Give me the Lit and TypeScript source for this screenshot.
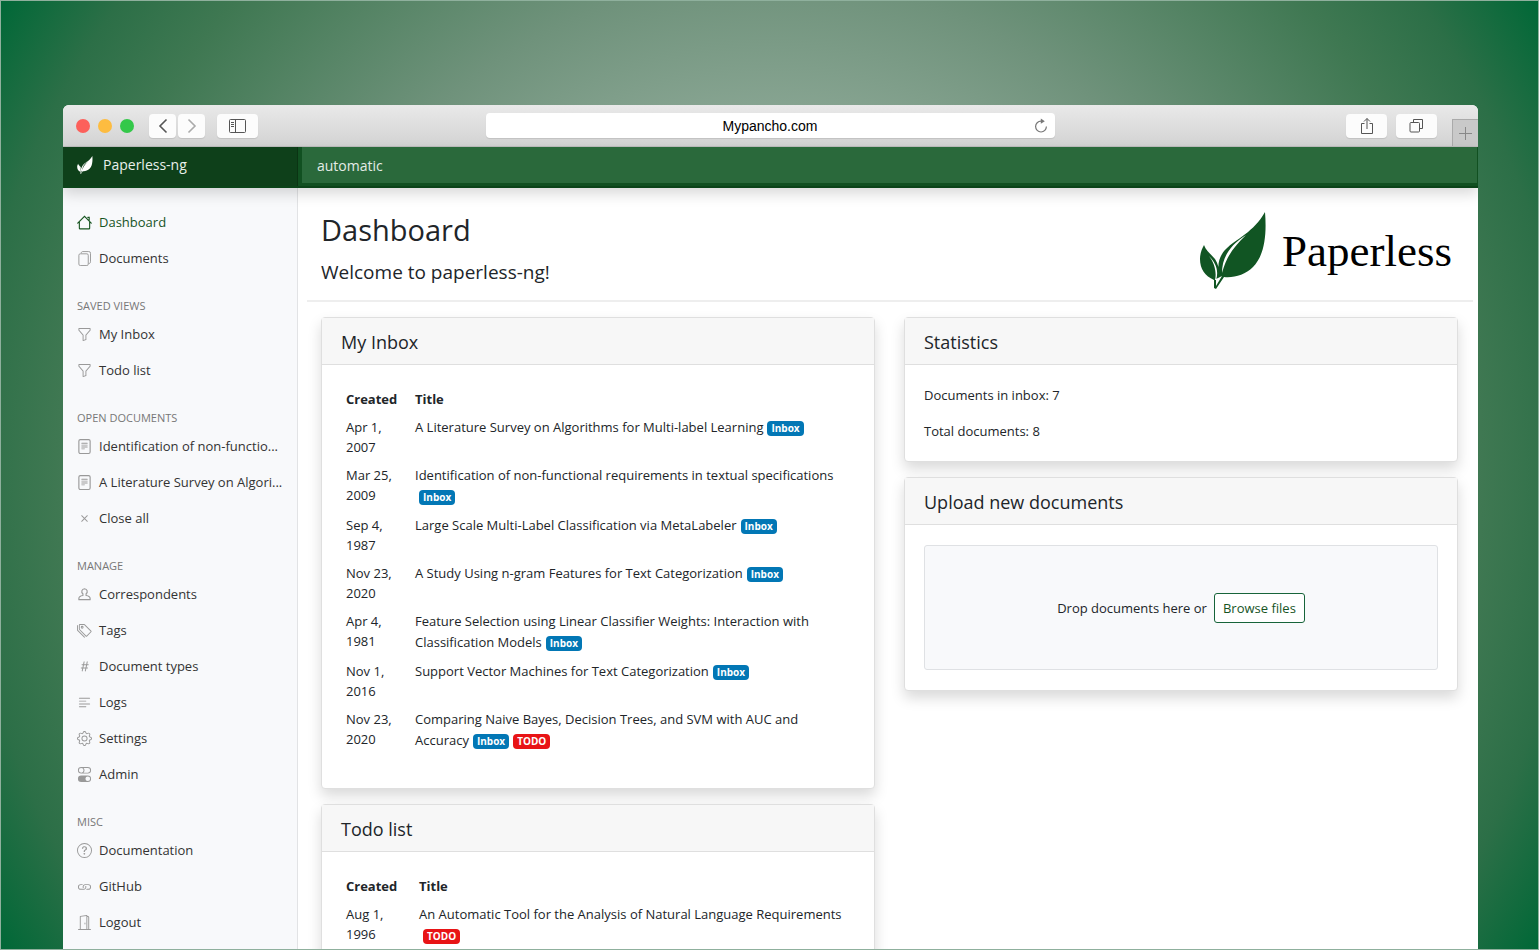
import { LitElement, html, css, svg, nothing } from "lit";
import { customElement } from "lit/decorators.js";

const icons: Record<string, unknown> = {
  house: svg`<path d="M2.500 7.500V14a.8.8 0 0 0 .8.8h9.400a.8.8 0 0 0 .8-.8V7.500M.8 8.700L8 1.500l7.200 7.200M11.500 2.500h1.500V6" fill="none" stroke="currentColor" stroke-width="1.200" stroke-linecap="round"/>`,
  files: svg`<path d="M3.500 3H10.500a1.500 1.500 0 0 1 1.500 1.500V14a1.500 1.500 0 0 1-1.500 1.500H3.500A1.500 1.500 0 0 1 2 14V4.500A1.500 1.500 0 0 1 3.500 3zM4.500 2.500C4.500 1.300 5 .6 6.200.6H12.500A1.800 1.800 0 0 1 14.400 2.500V11.500C14.400 12.700 13.800 13.300 12.500 13.300" fill="none" stroke="#999"/>`,
  funnel: svg`<path d="M1.500 1.500A.5.5 0 0 1 2 1h12a.5.5 0 0 1 .5.5v2a.5.5 0 0 1-.128.334L10 8.692V13.500a.5.5 0 0 1-.342.474l-3 1A.5.5 0 0 1 6 14.500V8.692L1.628 3.834A.5.5 0 0 1 1.500 3.500v-2zm1 .5v1.308l4.372 4.858A.5.5 0 0 1 7 8.500v5.306l2-.666V8.500a.5.5 0 0 1 .128-.334L13.500 3.308V2h-11z"/>`,
  file: svg`<path d="M5 4a.5.5 0 0 0 0 1h6a.5.5 0 0 0 0-1H5zm-.5 2.500A.5.5 0 0 1 5 6h6a.5.5 0 0 1 0 1H5a.5.5 0 0 1-.5-.5zM5 8a.5.5 0 0 0 0 1h6a.5.5 0 0 0 0-1H5zm0 2a.5.5 0 0 0 0 1h3a.5.5 0 0 0 0-1H5z"/><rect x="2" y=".6" width="12" height="14.800" rx="1.600" fill="none" stroke="#999" stroke-width="1.200"/>`,
  close: svg`<path d="M4.646 4.646a.5.5 0 0 1 .708 0L8 7.293l2.646-2.647a.5.5 0 0 1 .708.708L8.707 8l2.647 2.646a.5.5 0 0 1-.708.708L8 8.707l-2.646 2.647a.5.5 0 0 1-.708-.708L7.293 8 4.646 5.354a.5.5 0 0 1 0-.708z"/>`,
  person: svg`<path d="M8 1.800a3 3 0 0 1 1.700 5.400V9C12.300 9.400 14 10.500 14 12.200V13.500H2V12.200C2 10.500 3.700 9.400 6.300 9V7.200A3 3 0 0 1 8 1.800z" fill="none" stroke="#999" stroke-width="1.200" stroke-linejoin="round"/>`,
  tags: svg`<path d="M3 2v4.586l7 7L14.586 9l-7-7H3zM2 2a1 1 0 0 1 1-1h4.586a1 1 0 0 1 .707.293l7 7a1 1 0 0 1 0 1.414l-4.586 4.586a1 1 0 0 1-1.414 0l-7-7A1 1 0 0 1 2 6.586V2z"/><path d="M5.500 5a.5.5 0 1 1 0-1 .5.5 0 0 1 0 1zm0 1a1.500 1.500 0 1 0 0-3 1.500 1.500 0 0 0 0 3zM1 7.086a1 1 0 0 0 .293.707L8.750 15.250l-.043.043a1 1 0 0 1-1.414 0l-7-7A1 1 0 0 1 0 7.586V3a1 1 0 0 1 1-1v5.086z"/>`,
  hash: svg`<path d="M8.390 12.648a1.320 1.320 0 0 0-.015.180c0 .305.210.508.500.508.266 0 .492-.172.555-.477l.554-2.703h1.204c.421 0 .617-.234.617-.547 0-.312-.188-.530-.617-.530h-.985l.516-2.524h1.265c.430 0 .618-.227.618-.547 0-.313-.188-.524-.618-.524h-1.046l.476-2.304a1.060 1.060 0 0 0 .016-.164.510.510 0 0 0-.516-.516.540.540 0 0 0-.539.430l-.523 2.554H7.617l.477-2.304c.008-.040.015-.118.015-.164a.512.512 0 0 0-.523-.516.539.539 0 0 0-.531.430L6.530 5.484H5.414c-.430 0-.617.220-.617.532 0 .312.187.539.617.539h.906l-.515 2.523H4.609c-.421 0-.609.219-.609.531 0 .313.188.547.610.547h.976l-.516 2.492c-.008.040-.015.125-.015.180 0 .305.210.508.500.508.265 0 .492-.172.554-.477l.555-2.703h2.242l-.515 2.492zm-1-6.109h2.266l-.515 2.563H6.859l.532-2.563z"/>`,
  logs: svg`<path d="M2 12.500a.5.5 0 0 1 .5-.5h7a.5.5 0 0 1 0 1h-7a.5.5 0 0 1-.5-.5zm0-3a.5.5 0 0 1 .5-.5h11a.5.5 0 0 1 0 1h-11a.5.5 0 0 1-.5-.5zm0-3a.5.5 0 0 1 .5-.5h7a.5.5 0 0 1 0 1h-7a.5.5 0 0 1-.5-.5zm0-3a.5.5 0 0 1 .5-.5h11a.5.5 0 0 1 0 1h-11a.5.5 0 0 1-.5-.5z"/>`,
  gear: svg`<path d="M8 4.754a3.246 3.246 0 1 0 0 6.492 3.246 3.246 0 0 0 0-6.492zM5.754 8a2.246 2.246 0 1 1 4.492 0 2.246 2.246 0 0 1-4.492 0z"/><path d="M9.796 1.343c-.527-1.790-3.065-1.790-3.592 0l-.094.319a.873.873 0 0 1-1.255.520l-.292-.160c-1.640-.892-3.433.902-2.540 2.541l.159.292a.873.873 0 0 1-.520 1.255l-.319.094c-1.790.527-1.790 3.065 0 3.592l.319.094a.873.873 0 0 1 .520 1.255l-.160.292c-.892 1.640.901 3.434 2.541 2.540l.292-.159a.873.873 0 0 1 1.255.520l.094.319c.527 1.790 3.065 1.790 3.592 0l.094-.319a.873.873 0 0 1 1.255-.520l.292.160c1.640.893 3.434-.902 2.540-2.541l-.159-.292a.873.873 0 0 1 .520-1.255l.319-.094c1.790-.527 1.790-3.065 0-3.592l-.319-.094a.873.873 0 0 1-.520-1.255l.160-.292c.893-1.640-.902-3.433-2.541-2.540l-.292.159a.873.873 0 0 1-1.255-.520l-.094-.319zm-2.633.283c.246-.835 1.428-.835 1.674 0l.094.319a1.873 1.873 0 0 0 2.693 1.115l.291-.160c.764-.415 1.600.420 1.184 1.185l-.159.292a1.873 1.873 0 0 0 1.116 2.692l.318.094c.835.246.835 1.428 0 1.674l-.319.094a1.873 1.873 0 0 0-1.115 2.693l.160.291c.415.764-.420 1.600-1.185 1.184l-.291-.159a1.873 1.873 0 0 0-2.693 1.116l-.094.318c-.246.835-1.428.835-1.674 0l-.094-.319a1.873 1.873 0 0 0-2.692-1.115l-.292.160c-.764.415-1.600-.420-1.184-1.185l.159-.291A1.873 1.873 0 0 0 1.945 8.930l-.319-.094c-.835-.246-.835-1.428 0-1.674l.319-.094A1.873 1.873 0 0 0 3.060 4.377l-.160-.292c-.415-.764.420-1.600 1.185-1.184l.292.159a1.873 1.873 0 0 0 2.692-1.115l.094-.319z"/>`,
  toggles: svg`<path d="M4.500 9a3.500 3.500 0 1 0 0 7h7a3.500 3.500 0 1 0 0-7h-7zm7 6a2.500 2.500 0 1 1 0-5 2.500 2.500 0 0 1 0 5zm-7-14a2.500 2.500 0 1 0 0 5 2.500 2.500 0 0 0 0-5zm2.450 0A3.490 3.490 0 0 1 8 3.500 3.490 3.490 0 0 1 6.950 6h4.550a2.500 2.500 0 0 0 0-5H6.950zM4.500 0h7a3.500 3.500 0 1 1 0 7h-7a3.500 3.500 0 1 1 0-7z"/>`,
  question: svg`<path d="M8 15A7 7 0 1 1 8 1a7 7 0 0 1 0 14zm0 1A8 8 0 1 0 8 0a8 8 0 0 0 0 16z"/><path d="M5.255 5.786a.237.237 0 0 0 .241.247h.825c.138 0 .248-.113.266-.250.090-.656.540-1.134 1.342-1.134.686 0 1.314.343 1.314 1.168 0 .635-.374.927-.965 1.371-.673.489-1.206 1.060-1.168 1.987l.003.217a.250.250 0 0 0 .250.246h.811a.250.250 0 0 0 .250-.250v-.105c0-.718.273-.927 1.010-1.486.609-.463 1.244-.977 1.244-2.056 0-1.511-1.276-2.241-2.673-2.241-1.267 0-2.655.590-2.750 2.286zm1.557 5.763c0 .533.425.927 1.010.927.609 0 1.028-.394 1.028-.927 0-.552-.420-.940-1.029-.940-.584 0-1.009.388-1.009.940z"/>`,
  link: svg`<path d="M6.354 5.500H4a3 3 0 0 0 0 6h3a3 3 0 0 0 2.830-4H9c-.086 0-.170.010-.250.031A2 2 0 0 1 7 10.500H4a2 2 0 1 1 0-4h1.535c.218-.376.495-.714.820-1z"/><path d="M9 5.500a3 3 0 0 0-2.830 4h1.098A2 2 0 0 1 9 6.500h3a2 2 0 1 1 0 4h-1.535a4.020 4.020 0 0 1-.820 1H12a3 3 0 1 0 0-6H9z"/>`,
  door: svg`<path d="M8.500 10c-.276 0-.500-.448-.500-1s.224-1 .500-1 .500.448.500 1-.224 1-.500 1z"/><path d="M10.828.122A.5.5 0 0 1 11 .500V1h.500A1.500 1.500 0 0 1 13 2.500V15h1.500a.5.5 0 0 1 0 1h-13a.5.5 0 0 1 0-1H3V1.500a.5.5 0 0 1 .430-.495l7-1a.5.5 0 0 1 .398.117zM11.500 2H11v13h1V2.500a.5.5 0 0 0-.500-.500zM4 1.934V15h6V1.077l-6 .857z"/>`,
};

type NavItem = { icon: string; label: string; active?: boolean };
type NavGroup = { title?: string; items: NavItem[] };

const nav: NavGroup[] = [
  { items: [{ icon: "house", label: "Dashboard", active: true }, { icon: "files", label: "Documents" }] },
  { title: "Saved views", items: [{ icon: "funnel", label: "My Inbox" }, { icon: "funnel", label: "Todo list" }] },
  {
    title: "Open documents",
    items: [
      { icon: "file", label: "Identification of non-functio..." },
      { icon: "file", label: "A Literature Survey on Algori..." },
      { icon: "close", label: "Close all" },
    ],
  },
  {
    title: "Manage",
    items: [
      { icon: "person", label: "Correspondents" },
      { icon: "tags", label: "Tags" },
      { icon: "hash", label: "Document types" },
      { icon: "logs", label: "Logs" },
      { icon: "gear", label: "Settings" },
      { icon: "toggles", label: "Admin" },
    ],
  },
  {
    title: "Misc",
    items: [
      { icon: "question", label: "Documentation" },
      { icon: "link", label: "GitHub" },
      { icon: "door", label: "Logout" },
    ],
  },
];

type Doc = { created: string; title: string; tags: string[] };

const inbox: Doc[] = [
  { created: "Apr 1, 2007", title: "A Literature Survey on Algorithms for Multi-label Learning", tags: ["Inbox"] },
  { created: "Mar 25, 2009", title: "Identification of non-functional requirements in textual specifications", tags: ["Inbox"] },
  { created: "Sep 4, 1987", title: "Large Scale Multi-Label Classification via MetaLabeler", tags: ["Inbox"] },
  { created: "Nov 23, 2020", title: "A Study Using n-gram Features for Text Categorization", tags: ["Inbox"] },
  { created: "Apr 4, 1981", title: "Feature Selection using Linear Classifier Weights: Interaction with Classification Models", tags: ["Inbox"] },
  { created: "Nov 1, 2016", title: "Support Vector Machines for Text Categorization", tags: ["Inbox"] },
  { created: "Nov 23, 2020", title: "Comparing Naive Bayes, Decision Trees, and SVM with AUC and Accuracy", tags: ["Inbox", "TODO"] },
];

const todo: Doc[] = [
  { created: "Aug 1, 1996", title: "An Automatic Tool for the Analysis of Natural Language Requirements", tags: ["TODO"] },
];

const leaf = svg`
  <path d="M65 0C67 24 64 44 53 55C45 63 34 66 24 65L16 77L14 76L14 68C5 64 0 57 0 47C0 41 2 37 4 33C6 39 11 42 15 47C18 52 19 56 19 60C17 51 20 43 26 37C36 27 54 20 65 0Z"/>
  <path class="vein" d="M22 61C22 46 29 34 46 23C34 35 27 43 22 61ZM15 68C17 60 14 50 9 44C16 51 19 59 16 68ZM16 67L22 64L16 74Z"/>`;

@customElement("app-root")
export class AppRoot extends LitElement {
  static styles = css`
    :host {
      display: block;
      height: 100vh;
      overflow: hidden;
      box-sizing: border-box;
      padding: 104px 60px 0 62px;
      border: 1px solid #8fb09d;
      background: radial-gradient(circle at 50% 50%, #8ba795 0%, #8ba795 38%, #6f927b 55%, #3f7852 79%, #2c6f47 89%, #006837 100%);
      font-family: "Open Sans", "Noto Sans", sans-serif;
      font-size: 13px;
      line-height: 20px;
      color: #212529;
    }
    *,
    *::before {
      box-sizing: border-box;
    }
    h1, h2, h3, p, ul {
      margin: 0;
      padding: 0;
      font-weight: 400;
    }
    button {
      font: inherit;
      padding: 0;
      border: 0;
    }
    .window {
      height: 100%;
      display: flex;
      flex-direction: column;
      border-radius: 6px 6px 0 0;
      overflow: hidden;
      background: #fff;
    }
    .chrome {
      flex: none;
      height: 42px;
      display: grid;
      grid-template-columns: 1fr minmax(200px, 569px) 1fr;
      align-items: center;
      background: linear-gradient(#e9e9e9, #d3d3d3);
      border-bottom: 1px solid #bdbdbd;
    }
    .left, .right {
      display: flex;
      align-items: center;
    }
    .left {
      padding-left: 13px;
    }
    .dot {
      width: 14px;
      height: 14px;
      margin-right: 8px;
      border-radius: 50%;
    }
    .red { background: #fc605b; }
    .yellow { background: #fdbc40; }
    .green { background: #34c84a; }
    .tool {
      display: grid;
      place-items: center;
      height: 24px;
      border-radius: 4px;
      background: #fcfcfc;
      color: #555;
      box-shadow: 0 1px 1px #0000001a;
    }
    .tool svg {
      display: block;
      fill: none;
      stroke: currentColor;
    }
    .small { width: 27px; margin-right: 2px; }
    .wide { width: 41px; }
    .first { margin-left: 7px; }
    .side { margin-left: 10px; }
    .tool.dim { color: #aaa; }
    .address {
      display: flex;
      align-items: center;
      height: 25px;
      padding: 0 7px 0 20px;
      border-radius: 4px;
      background: #fff;
      box-shadow: 0 1px 1px #0000001a;
    }
    .address input {
      flex: 1;
      min-width: 0;
      border: 0;
      padding: 0;
      background: none;
      text-align: center;
      font: 14px/20px "Liberation Sans", Arial, sans-serif;
      color: #000;
    }
    .reload {
      display: grid;
      background: none;
      color: #777;
    }
    .reload svg { fill: none; stroke: currentColor; }
    .right {
      height: 100%;
      justify-content: flex-end;
      gap: 9px;
    }
    .newtab {
      align-self: flex-end;
      width: 26px;
      height: 27px;
      margin-left: 6px;
      display: grid;
      place-items: center;
      border: solid #aaa;
      border-width: 1px 0 0 1px;
      background: #c9c9c9;
      color: #888;
    }
    .newtab svg { stroke: currentColor; }
    .topbar {
      flex: none;
      height: 41px;
      display: flex;
      background: #115021;
      border-bottom: 2px solid #0b4419;
      position: relative;
      z-index: 1;
      box-shadow: 0 6px 14px #00000026;
      font-size: 14px;
      color: #fff;
    }
    .brand {
      width: 235px;
      flex: none;
      display: flex;
      align-items: center;
      gap: 10px;
      padding: 0 14px 3px;
      background: #0e401a;
      border-right: 1px solid #0a3413;
      color: #e9efea;
      text-decoration: none;
    }
    .brand svg { fill: #fff; }
    .brand .vein { fill: #0e401a; }
    .search {
      flex: 1;
      min-width: 0;
      margin: 0 1px 3px 4px;
      padding: 2px 15px 0;
      border: 0;
      outline: 0;
      background: #2a693b;
      color: #e4ece6;
      font: inherit;
    }
    .body {
      flex: 1;
      min-height: 0;
      display: flex;
    }
    .sidebar {
      width: 235px;
      flex: none;
      padding: 16px 0 0;
      background: #f8f9fb;
      border-right: 1px solid #e2e3e5;
      overflow: hidden;
    }
    .sidebar ul {
      list-style: none;
      margin-bottom: 20px;
    }
    .link {
      display: flex;
      align-items: center;
      gap: 7px;
      height: 36px;
      padding: 0 14px;
      color: #333;
      text-decoration: none;
    }
    .link svg {
      flex: none;
      width: 15px;
      height: 15px;
      fill: #999;
    }
    .link span {
      white-space: nowrap;
    }
    .link.active { color: #17541f; }
    .active svg { fill: #17541f; }
    .heading {
      padding: 0 14px;
      font-size: 11px;
      line-height: 20px;
      text-transform: uppercase;
      color: #777;
    }
    main {
      flex: 1;
      min-width: 0;
      padding: 0 5px 0 9px;
    }
    .head {
      display: flex;
      justify-content: space-between;
      height: 114px;
      padding: 24px 21px 0 14px;
      border-bottom: 2px solid #eee;
    }
    h1 {
      font-size: 29px;
      line-height: 36px;
    }
    .welcome {
      margin-top: 11px;
      font-size: 19px;
      line-height: 26px;
    }
    .logo { fill: #115523; }
    .logo .vein { fill: #fff; }
    .logo text {
      fill: #000;
      font-family: "Liberation Serif", serif;
      font-size: 45px;
    }
    .columns {
      display: grid;
      grid-template-columns: 1fr 1fr;
      gap: 29px;
      align-items: start;
      padding: 15px 15px 0 14px;
    }
    .column {
      display: grid;
      gap: 15px;
    }
    .card {
      border: 1px solid #dfdfdf;
      border-radius: 4px;
      background: #fff;
      box-shadow: 0 7px 14px #00000026;
    }
    .card h2 {
      height: 47px;
      padding: 0 19px;
      border-bottom: 1px solid #dfdfdf;
      background: #f7f7f7;
      font-size: 18px;
      line-height: 48px;
    }
    .content { padding: 20px 19px; }
    .table-content { padding: 20px 19px 33px; }
    table {
      width: 100%;
      border-collapse: collapse;
    }
    th, td {
      padding: 4px 5px;
      text-align: left;
      vertical-align: top;
    }
    .title { line-height: 21px; }
    .date { width: 69px; }
    .todo-date { width: 73px; }
    .tag {
      display: inline-block;
      height: 15px;
      margin-left: 4px;
      padding: 0 4px;
      border-radius: 4px;
      background: #0277b5;
      color: #fff;
      font-size: 10px;
      font-weight: 700;
      line-height: 15px;
    }
    .todo { background: #e81416; }
    .stat + .stat { margin-top: 16px; }
    .drop {
      display: flex;
      align-items: center;
      justify-content: center;
      gap: 7px;
      height: 125px;
      border: 1px solid #dfe1e4;
      border-radius: 3px;
      background: #f8f9fb;
    }
    .browse {
      height: 30px;
      padding: 0 8px;
      border: 1px solid #17643a;
      border-radius: 3px;
      background: #fff;
      color: #17541f;
    }
  `;

  private table(title: string, docs: Doc[], dateClass: string) {
    return html`<section class="card">
      <h2>${title}</h2>
      <div class="table-content">
        <table>
          <thead><tr><th class=${dateClass}>Created</th><th>Title</th></tr></thead>
          <tbody>
            ${docs.map((d) => html`<tr>
              <td>${d.created}</td>
              <td class="title">${d.title}${d.tags.map((t) => html`<wbr><span class="tag ${t === "TODO" ? "todo" : ""}">${t}</span>`)}</td>
            </tr>`)}
          </tbody>
        </table>
      </div>
    </section>`;
  }

  render() {
    return html`<div class="window">
      <div class="chrome">
        <div class="left">
          <span class="dot red"></span><span class="dot yellow"></span><span class="dot green"></span>
          <button class="tool small first" aria-label="Back"><svg width="10" height="16" stroke-width="1.600"><path d="M8.500 1.500L2 8l6.500 6.500"/></svg></button>
          <button class="tool small dim" aria-label="Forward"><svg width="10" height="16" stroke-width="1.600"><path d="M1.500 1.500L8 8l-6.500 6.500"/></svg></button>
          <button class="tool wide side" aria-label="Show sidebar"><svg width="18" height="14"><rect x=".5" y=".5" width="16" height="13" rx="1"/><path d="M6.500 .5v13M2 3.500h3M2 5.500h3M2 7.500h3"/></svg></button>
        </div>
        <div class="address">
          <input aria-label="Address" value="Mypancho.com">
          <button class="reload" aria-label="Reload"><svg width="14" height="16" stroke-width="1.200"><path d="M8.500 3.200H7A5.400 5.400 0 1 0 12.400 8.600"/><path d="M6.800.6L10.800 3.200L6.800 5.800Z" fill="currentColor" stroke="none"/></svg></button>
        </div>
        <div class="right">
          <button class="tool wide" aria-label="Share"><svg width="14" height="18"><path d="M4.500 6.500h-3v10h11v-10h-3M7 12V1.500M4 4.500l3-3 3 3"/></svg></button>
          <button class="tool wide" aria-label="Show tabs"><svg width="15" height="15"><rect x="1" y="4.500" width="9.500" height="9.500" rx="1"/><path d="M4.500 4V1.500h9v9H11"/></svg></button>
          <button class="newtab" aria-label="New tab"><svg width="13" height="13"><path d="M6.500 0v13M0 6.500h13"/></svg></button>
        </div>
      </div>
      <header class="topbar">
        <a class="brand" href="#"><svg width="16" height="18" viewBox="0 0 67 77">${leaf}</svg>Paperless-ng</a>
        <input class="search" aria-label="Search documents" value="automatic">
      </header>
      <div class="body">
        <nav class="sidebar">
          ${nav.map((g) => html`${g.title ? html`<h3 class="heading">${g.title}</h3>` : nothing}
            <ul>${g.items.map((i) => html`<li><a class="link ${i.active ? "active" : ""}" href="#"><svg viewBox="0 0 16 16">${icons[i.icon]}</svg><span>${i.label}</span></a></li>`)}</ul>`)}
        </nav>
        <main>
          <div class="head">
            <div><h1>Dashboard</h1><p class="welcome">Welcome to paperless-ng!</p></div>
            <svg class="logo" width="252" height="80" viewBox="0 0 252 80">${leaf}<text x="82" y="54">Paperless</text></svg>
          </div>
          <div class="columns">
            <div class="column">${this.table("My Inbox", inbox, "date")}${this.table("Todo list", todo, "todo-date")}</div>
            <div class="column">
              <section class="card">
                <h2>Statistics</h2>
                <div class="content"><p class="stat">Documents in inbox: 7</p><p class="stat">Total documents: 8</p></div>
              </section>
              <section class="card">
                <h2>Upload new documents</h2>
                <div class="content"><div class="drop"><span>Drop documents here or</span><button class="browse">Browse files</button></div></div>
              </section>
            </div>
          </div>
        </main>
      </div>
    </div>`;
  }
}
